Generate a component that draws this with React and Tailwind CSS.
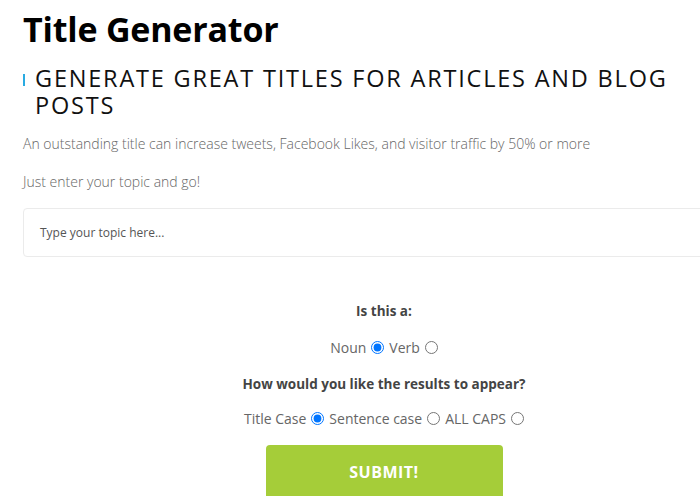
import React from "react";

const font = { fontFamily: '"Open Sans", "DejaVu Sans", sans-serif' };

const Radio = ({ name, checked }) => (
  <input
    type="radio"
    name={name}
    defaultChecked={checked}
    className="w-[13px] h-[13px] m-0 accent-[#0075ff] align-middle"
  />
);

export default function App() {
  return (
    <div className="w-[700px] h-[496px] overflow-hidden bg-white" style={font}>
      <div className="w-[722px] ml-[23px]">
        <h1 className="text-[34px] font-bold text-black leading-none pt-[12px] tracking-[-0.2px]">
          Title Generator
        </h1>
        <div className="flex mt-[19px]">
          <span className="w-[2px] h-[12px] bg-[#29abe2] mt-[9px] mr-[10px] shrink-0" />
          <h2 className="text-[23.5px] font-medium text-[#111] leading-[27px] uppercase tracking-[1.8px] w-[650px]">
            Generate great titles for articles and blog posts
          </h2>
        </div>
        <p className="text-[14px] font-light text-[#666] mt-[14px]">
          An outstanding title can increase tweets, Facebook Likes, and visitor traffic by 50% or more
        </p>
        <p className="text-[14px] font-light text-[#666] mt-[17px]">
          Just enter your topic and go!
        </p>
        <div className="mt-[16px] h-[49px] border border-[#ebebeb] rounded-[4px] flex items-center px-[16px]">
          <span className="text-[12px] text-[#555]">Type your topic here...</span>
        </div>
        <div className="flex flex-col items-center text-[14px] text-[#666] mt-[44px]">
          <p className="font-bold text-[#444] text-[13.5px]">Is this a:</p>
          <div className="flex items-center gap-[5px] mt-[16px]">
            <span>Noun</span>
            <Radio name="type" checked />
            <span>Verb</span>
            <Radio name="type" />
          </div>
          <p className="font-bold text-[#444] text-[13.5px] mt-[16px]">How would you like the results to appear?</p>
          <div className="flex items-center gap-[5px] mt-[13px]">
            <span>Title Case</span>
            <Radio name="case" checked />
            <span>Sentence case</span>
            <Radio name="case" />
            <span>ALL CAPS</span>
            <Radio name="case" />
          </div>
          <button className="mt-[16px] w-[237px] h-[54px] bg-[#a5cd39] rounded-[4px] text-white font-bold text-[16px] tracking-[0.5px]">
            SUBMIT!
          </button>
        </div>
      </div>
    </div>
  );
}
